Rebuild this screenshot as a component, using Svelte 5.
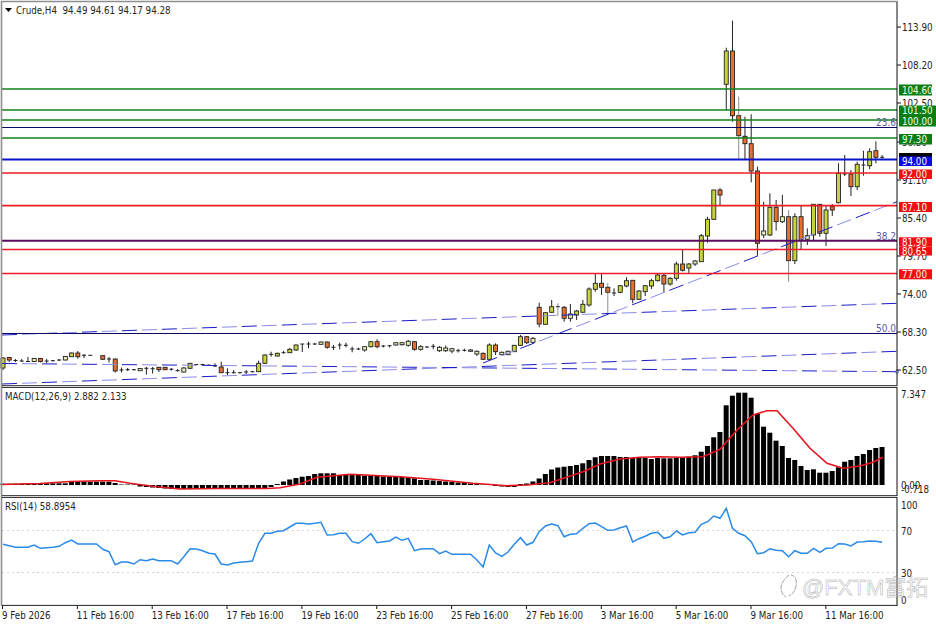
<script>
	const RIGHT = 897
	const barX = i => 3 + 6.235 * i

	// wick top, body top, body bottom, wick bottom, kind (u up, d down, w small up, none = doji)
	const candles = [
		[357,358,368,370,"u"],[357,357.5,360,362,"d"],[359,360.5,360.5,362],[359,361,361,362],[357,361.5,361.5,362],
		[358,358.5,361.5,362,"w"],[358,358.5,361.5,362.5,"d"],[359,361,361,363],[360,360.7,360.7,361.5],[359,360,360,361],
		[356,356.5,360,360.5,"w"],[352.5,353,356.7,357,"u"],[351,353,356.7,358.7,"d"],[354,355.3,355.3,358],[355,355.3,355.3,356],
		null,[355,355.7,359.3,360,"d"],[357,359,359,362.5],[358.5,359,371,372.5,"d"],[367.5,370,370,372.5],
		[368,369.7,369.7,371],[369,369.7,369.7,370.5],[368,368.5,370.7,371,"w"],[367,368.3,368.3,374.5],[367,368.7,368.7,373.5],
		[367,367.3,369.7,372,"d"],[367,367.3,369.7,370,"d"],[368,369.3,369.3,370.5],[369,370.7,370.7,371.5],[367,368,372,372.5,"w"],
		[363,363.3,368.3,369,"u"],[364,364.5,364.5,365],[364,364.5,364.5,365],[364.5,365.3,365.3,366],[363.3,366,366,367],
		[361.7,367,372.7,373,"d"],[368.3,372.7,372.7,375],[370,372.7,372.7,373.5],[372,372.7,372.7,373.5],[370,372,372,374],
		[371,371.7,371.7,372.5],[360.7,363.3,371.7,372,"u"],[354.5,355,363.3,364,"u"],[351.7,354.3,354.3,356.7],[352.5,353.3,356,356.5,"u"],
		[351,352.7,352.7,353.5],[348,349.3,352.7,353,"u"],[344.5,345,350,351,"u"],[344,344,344,352],[341.7,344,344,348.3],
		[343,344,344,345],[341.5,342,344.3,345,"w"],[341.5,342,347.3,348.7,"d"],[345,347.3,347.3,350],[342.7,345,345,349.3],
		[342.7,345.3,345.3,347.3],[346.7,349,349,352.3],[347.7,349,349,350],[346,346.7,350,351.7,"w"],[341,341.7,346.7,347.5,"u"],
		[339.3,341.7,346.7,348.3,"d"],[345,346,346,347.5],[345,345.7,345.7,347.5],[342,342.7,345,345.5,"w"],[342,342.7,344.7,345.5,"w"],
		[340,341.3,345.3,346.7,"w"],[341.5,341.7,349.3,350.7,"d"],[345,346.7,349.3,350.7,"w"],[346.3,347,347,348],[344,346.3,346.3,349.3],
		[346,347.3,350.7,352,"w"],[345.5,348,350.7,352,"w"],[348,348.7,351,353.3,"w"],[348.7,350.7,350.7,352.5],[348.7,350.3,350.3,351.5],
		[349,350,351.3,352,"w"],[350.5,351.3,354,356,"w"],[352.5,353.3,359.3,360,"d"],[343.3,345,359.3,360.7,"u"],[343.3,345,351.7,355,"d"],
		[351.5,352.3,354.7,355,"w"],[350.5,351.3,354.7,355,"w"],[345,345.3,351.7,352,"u"],[335,336.7,345.3,346,"u"],[336,336.7,342.7,344,"d"],
		[337,338.3,342.3,344,"w"],[302.7,307.3,324,327.3,"d"],[312,312.7,324.3,325,"u"],[300,306.7,312.3,313,"u"],[303.3,306.7,306.7,316],
		[306,307.3,318.3,321.7,"d"],[304,314,318.3,321.7,"w"],[310,311,315,320,"u"],[300,304.3,312.3,313,"u"],[287.3,289,305,306.7,"u"],
		[273.3,283.3,289.3,291.7,"u"],[273.3,283.3,287.3,295,"d"],[283,287.3,292.3,313.3,"d"],[288.3,293,293,296],[285,285.7,292.3,293.3,"u"],
		[277.3,280.7,286,287.3,"u"],[280,280.3,299.3,303.3,"d"],[290,291,299.3,300,"u"],[285,285.7,291.7,296,"u"],[279,280.7,286,289,"u"],
		[274,275,280.7,281.5,"u"],[273.3,275.3,284,292.7,"d"],[277,278.3,284,285.7,"u"],[261.7,264,278.3,280.7,"u"],[250,264,270.3,271.5,"d"],
		[263,264,268,273.3,"u"],[260,261,264,266,"w"],[234,235.7,261.7,262,"u"],[216.7,219.3,236,242.7,"u"],[190,190,219.3,220,"u"],
		[188,190,195,205,"d"],[47.7,51,84.3,110,"u"],[20.7,51,115.7,121.7,"d"],[96.7,115.7,135.7,160,"d"],[116.7,136.3,143.7,159,"d"],
		[114.3,143.7,171,182.3,"d"],[166.7,171,243.3,256,"d"],[201.7,231,235,238,"w"],[193.3,207.3,235,236,"u"],[200,207.3,221.7,230.7,"d"],
		[195,216.7,221.7,223,"w"],[210,216.7,260.7,281.7,"d"],[213.3,216.7,260.7,264,"u"],[205.7,216.7,239.3,249.3,"d"],[228.3,235.7,239.3,245,"w"],
		[204.3,204.3,235,240,"u"],[204.3,204.3,233.3,236.7,"d"],[205,210,233.3,246,"u"],[204,206.7,210,216,"d"],[163.3,173.3,202.7,203.5,"u"],
		[155,174,174,176],[170,174,186.7,196,"d"],[161.7,164.3,186.7,190,"u"],[150.7,165,165,175.7],[148.3,151.7,165.7,169,"u"],
		[141.3,150.7,157.3,163.3,"d"],[155,157.3,157.3,158.5]
	]
	const greyWicks = new Set([89, 97, 118, 126])

	const levels = [
		{ y: 89, cls: "green" },
		{ y: 110, cls: "green" },
		{ y: 120, cls: "green" },
		{ y: 127.5, cls: "navy" },
		{ y: 138, cls: "green" },
		{ y: 159.5, cls: "blue" },
		{ y: 173, cls: "red" },
		{ y: 205.7, cls: "red" },
		{ y: 240.7, cls: "purple" },
		{ y: 249.5, cls: "red" },
		{ y: 273.5, cls: "red" },
		{ y: 333.5, cls: "navy" }
	]

	const fanLines = [
		[2, 335, RIGHT, 303.3],
		[483, 363, RIGHT, 201.7],
		[2, 384, RIGHT, 351.3],
		[2, 363.5, RIGHT, 371.7]
	]

	const fibs = [
		{ label: "23.6", y: 126 },
		{ label: "38.2", y: 240 },
		{ label: "50.0", y: 332 }
	]

	const priceTicks = [
		["113.90", 27], ["108.20", 65], ["102.50", 103], ["96.80", 142], ["91.10", 180],
		["85.40", 218], ["79.70", 256], ["74.00", 294], ["68.30", 332], ["62.50", 370]
	]

	const tags = [
		{ label: "104.60", y: 84.5, h: 11, cls: "green" },
		{ label: "101.50", y: 105.5, h: 10.5, cls: "green wide" },
		{ label: "100.00", y: 116, h: 10.5, cls: "green wide" },
		{ label: "97.30", y: 134, h: 10.5, cls: "green" },
		{ label: "94.00", y: 156.5, h: 9.5, cls: "blue" },
		{ label: "92.00", y: 169.5, h: 9.5, cls: "red" },
		{ label: "87.10", y: 202, h: 10, cls: "red" },
		{ label: "81.90", y: 237.3, h: 9.4, cls: "red" },
		{ label: "80.65", y: 246.7, h: 8.8, cls: "red" },
		{ label: "77.00", y: 269.3, h: 10, cls: "red" }
	]

	const macdTops = [
		483.7,483.7,483.7,483.7,483.7,483.3,483.3,483.3,483.3,483.3,483.3,481,481,481.7,481.7,481.7,481.7,481.7,483,484.5,
		484.5,484.5,486.5,487,487.5,488,488.5,489,489,489,489,489,489,489,489,489,489,489,489,489,
		489,488.5,488,487,484,481.5,479.5,478,476.7,476,474,473.3,473.3,473.3,475,474,474,475,475.5,476,
		476,476.5,476.7,477,477,477,478.3,480,480,480.5,481,481.5,482,482.5,483,483.5,484,484.5,484.5,486,
		486.5,487,487,484,483.5,481.5,478.5,474,469.5,467.5,466.7,466,465,463.3,460,457.3,456,456,456,457,
		457,458,458,458,459,458,458.3,458.3,457.7,457.7,456.7,455.3,451.7,446,437.3,432,405.3,395.7,392.7,392.7,
		397.7,414,426.7,432.7,440.7,446,458,460,466,470,469.3,472.7,472.7,471,467.3,461.7,460,456,454,450,
		448,447
	]
	const MACD_ZERO = 485

	const signal = [
		[2,484.5],[40,483.5],[70,481.5],[100,480.7],[115,480.7],[130,483.3],[157,486.7],[180,489],[217,488.5],[267,488.5],
		[280,487.7],[300,484],[317,477.3],[350,474.3],[400,476.7],[433,479.3],[473,483.3],[507,485.7],[527,485],[550,482.7],
		[583,471.7],[600,464],[620,459],[640,457.2],[660,456.7],[680,457.3],[703,456.7],[720,449.3],[737,430],[753,415],
		[767,410.7],[777,410.7],[793,428.3],[810,448.3],[827,463.3],[843,468.3],[860,466],[873,462.3],[883,457.3]
	]

	// read off in thirds of a pixel below y = 490
	const rsiTrace = [
		163,167,172,172,172,165,175,173,172,169,158,150,162,162,162,162,178,185,224,216,
		216,222,209,212,207,212,212,212,222,200,176,177,182,190,192,222,225,219,217,215,
		213,160,130,130,124,122,111,100,100,102,100,97,135,134,130,130,155,160,147,131,
		158,155,153,141,151,145,182,177,176,176,191,183,193,193,193,193,210,231,165,189,
		199,186,163,143,165,157,125,108,102,107,140,133,131,115,101,99,110,121,120,113,
		108,156,146,139,130,127,145,140,123,135,128,127,103,95,78,85,55,115,130,137,
		155,191,188,176,181,182,200,182,190,190,175,187,175,174,161,162,168,156,155,153,
		154,157
	]

	const rsiTicks = [["100", 504.5], ["70", 530.5], ["30", 572.5], ["0", 599.5]]

	const dates = [
		"9 Feb 2026", "11 Feb 16:00", "13 Feb 16:00", "17 Feb 16:00", "19 Feb 16:00", "23 Feb 16:00",
		"25 Feb 16:00", "27 Feb 16:00", "3 Mar 16:00", "5 Mar 16:00", "9 Mar 16:00", "11 Mar 16:00"
	]

	const signalPath = signal.map(p => p.join(",")).join(" ")
	const rsiPath = rsiTrace.map((v, i) => `${barX(i).toFixed(1)},${(490 + v / 3).toFixed(1)}`).join(" ")
</script>

<div class="terminal">
	<svg class="pane main" viewBox="0 0 936 387">
		{#each candles as c, i}
			{#if c}
				<line class="wick" class:grey={greyWicks.has(i)} x1={barX(i)} x2={barX(i)} y1={c[0]} y2={c[3]} />
				{#if c[4]}
					<rect class="body {c[4]}" x={barX(i) - 2} y={c[1]} width="4" height={c[2] - c[1]} />
				{:else}
					<line class="wick" x1={barX(i) - 2} x2={barX(i) + 2} y1={c[1]} y2={c[1]} />
				{/if}
			{/if}
		{/each}

		{#each fanLines as l}
			<line class="fan" x1={l[0]} y1={l[1]} x2={l[2]} y2={l[3]} />
			<line class="fan pale" x1={l[0]} y1={l[1]} x2={l[2]} y2={l[3]} />
		{/each}
		<circle class="anchor" cx="897" cy="371.7" r="1.5" />

		{#each levels as l}
			<line class="level {l.cls}" x1="2" x2={RIGHT} y1={l.y} y2={l.y} />
		{/each}

		{#each fibs as f}
			<text class="fib" x="896" y={f.y}>{f.label}</text>
		{/each}

		<path d="M5 8h7l-3.5 4z" />
		<text class="legend" x="16" y="14">Crude,H4  94.49 94.61 94.17 94.28</text>

		<line class="axis" x1={RIGHT} x2={RIGHT} y1="1" y2="386" />
		{#each priceTicks as t}
			<line class="axis" x1={RIGHT} x2="901" y1={t[1]} y2={t[1]} />
			<text class="tick" x="902" y={t[1] + 4}>{t[0]}</text>
		{/each}

		<rect class="last" x="899" y="153" width="33" height="6" />
		{#each tags as t}
			<rect class="tag {t.cls}" x="899" y={t.y} height={t.h} />
			<text class="tag-text" x="902" y={t.y + t.h / 2 + 3.6}>{t.label}</text>
		{/each}

		<line class="frame" x1="1.5" x2="1.5" y1="1" y2="387" />
		<line class="frame" x1="1" x2={RIGHT} y1="1.5" y2="1.5" />
		<line class="edge" x1="2" x2={RIGHT} y1="385.7" y2="385.7" />
	</svg>

	<svg class="pane" viewBox="0 387 936 110">
		{#each macdTops as top, i}
			<rect class="hist" x={barX(i) - 2.6} y={Math.min(top, MACD_ZERO)} width="5" height={Math.max(Math.abs(MACD_ZERO - top), 0.5)} />
		{/each}
		<polyline class="signal" points={signalPath} />
		<text class="legend" x="5" y="400">MACD(12,26,9) 2.882 2.133</text>
		<line class="axis" x1={RIGHT} x2={RIGHT} y1="387" y2="496" />
		<text class="tick" x="901" y="398">7.347</text>
		<text class="tick" x="901" y="489">0.00</text>
		<text class="tick" x="901" y="493">-0.718</text>
		<line class="frame" x1="1.5" x2="1.5" y1="387" y2="497" />
		<line class="edge" x1="2" x2={RIGHT} y1="387.4" y2="387.4" />
		<line class="edge" x1="2" x2={RIGHT} y1="495.7" y2="495.7" />
	</svg>

	<svg class="pane" viewBox="0 497 936 109">
		<line class="guide" x1="2" x2={RIGHT} y1="530.5" y2="530.5" />
		<line class="guide" x1="2" x2={RIGHT} y1="572.5" y2="572.5" />
		<polyline class="rsi" points={rsiPath} />
		<text class="legend" x="5" y="510">RSI(14) 58.8954</text>
		<line class="axis" x1={RIGHT} x2={RIGHT} y1="497" y2="606" />
		{#each rsiTicks as t}
			<text class="tick" x="901" y={t[1] + 4}>{t[0]}</text>
		{/each}
		<line class="frame" x1="1.5" x2="1.5" y1="497" y2="606" />
		<line class="edge" x1="2" x2={RIGHT} y1="497.4" y2="497.4" />
		<line class="edge" x1="2" x2={RIGHT} y1="605.4" y2="605.4" />

		<g class="mark">
			<path d="M789 575c-5 4-8 9-8 13 0 4 2 7 5 9M791 575c5 1 6 6 5 11-1 5-3 8-7 10" />
			<text x="802" y="595">@FXTM富拓</text>
		</g>
	</svg>

	<svg class="pane" viewBox="0 606 936 18">
		{#each dates as d, i}
			<line class="axis" x1={2.5 + i * 74.85} x2={2.5 + i * 74.85} y1="605" y2="609" />
			<text class="tick" x={2 + i * 74.85} y="619">{d}</text>
		{/each}
	</svg>
</div>

<style>
	:global(body) {
		background: #fff;
	}
	.terminal {
		display: grid;
		grid-template-rows: 387px 110px 109px 18px;
		width: 936px;
		height: 624px;
		overflow: hidden;
		background: #fff;
	}
	.pane {
		display: block;
		width: 936px;
		height: 100%;
		overflow: hidden;
	}
	text {
		font-family: "DejaVu Sans Condensed", "DejaVu Sans", sans-serif;
		font-stretch: condensed;
		font-size: 9.7px;
		fill: #262626;
		white-space: pre;
	}
	.wick {
		stroke: #222;
		stroke-width: 1;
	}
	.wick.grey {
		stroke: #8c8c8c;
	}
	.body {
		stroke: #222;
		stroke-width: 0.9;
	}
	.body.u {
		fill: #c8d43c;
	}
	.body.w {
		fill: #eef2bc;
	}
	.body.d {
		fill: #e8702c;
	}
	.fan {
		stroke: #1a1ac8;
		stroke-width: 1;
		stroke-dasharray: 15 25;
	}
	.fan.pale {
		stroke: #8c8ce8;
		stroke-dashoffset: -20;
	}
	.anchor {
		fill: #fff;
		stroke: #3030d0;
		stroke-width: 0.7;
	}
	.level {
		stroke-width: 1.7;
	}
	.level.green {
		stroke: #10801a;
	}
	.level.navy {
		stroke: #0a0a66;
		stroke-width: 1;
	}
	.level.blue {
		stroke: #0a14c8;
		stroke-width: 2.2;
	}
	.level.red {
		stroke: #ee1c25;
	}
	.level.purple {
		stroke: #5c0a5c;
		stroke-width: 2;
	}
	.fib {
		fill: #5a5aa0;
		font-size: 10px;
		text-anchor: end;
	}
	.axis {
		stroke: #111;
		stroke-width: 1;
	}
	.tick {
		fill: #222;
	}
	.frame {
		stroke: #8e8e8e;
		stroke-width: 1.6;
	}
	.edge {
		stroke: #222;
		stroke-width: 1;
	}
	.last {
		fill: #000;
	}
	.tag {
		width: 33px;
	}
	.tag.wide {
		width: 37px;
	}
	.tag.green {
		fill: #0b7d12;
	}
	.tag.blue {
		fill: #0a0ae6;
	}
	.tag.red {
		fill: #f30d12;
	}
	.tag-text {
		fill: #f0fff0;
	}
	.hist {
		fill: #000;
	}
	.signal {
		fill: none;
		stroke: #e5141e;
		stroke-width: 1.6;
	}
	.guide {
		stroke: #d8d4cc;
		stroke-width: 1;
		stroke-dasharray: 2 3;
	}
	.rsi {
		fill: none;
		stroke: #2a8ae8;
		stroke-width: 1.5;
	}
	.mark path {
		fill: none;
		stroke: #a0a0a0;
		stroke-width: 1;
		stroke-dasharray: 5 1;
	}
	.mark text {
		font-family: "Liberation Sans", "Noto Sans CJK SC", sans-serif;
		font-size: 22px;
		font-stretch: normal;
		fill: none;
		stroke: #b0b0b0;
		stroke-width: 0.5;
	}
</style>
